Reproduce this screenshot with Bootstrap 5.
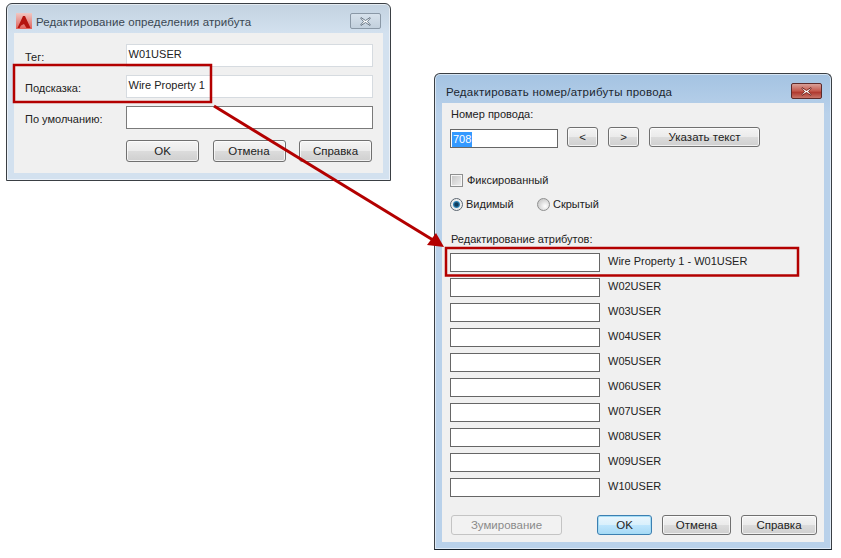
<!DOCTYPE html>
<html lang="ru">
<head>
<meta charset="utf-8">
<title>Атрибуты провода</title>
<link href="https://cdn.jsdelivr.net/npm/bootstrap@5.3.0/dist/css/bootstrap.min.css" rel="stylesheet">
<style>
body{margin:0;background:#fff;color:#222;font-family:"Liberation Sans",Arial,sans-serif;font-size:11px;line-height:16px}
.stage{width:841px;height:558px;overflow:hidden}
.win{border:1px solid #3a3f44;border-radius:6px 6px 0 0;padding:0 7px 7px;box-shadow:inset 0 0 0 1px rgba(255,255,255,.55)}
.win-a{left:6px;top:3px;width:385px;height:178px;background:linear-gradient(#c3d2e0,#d3e1ef 30px,#d3e1ef)}
.win-b{left:434px;top:73px;width:398px;height:477px;background:linear-gradient(#a4c3e2,#b9d1ea 40px,#b9d1ea);border-bottom-color:#16202a}
.cap{height:29px;padding-top:10px}
.cap-text{color:#3a4752;font-size:11.5px;letter-spacing:.1px}
.cap-b{padding-left:4px;color:#1b2630;letter-spacing:.27px}
.app-ico{margin:-1px 4px 0 2px;flex:none}
.client{background:#f0f0f0}
.client-a{height:140px;padding:11px 10px 0 11px}
.client-b{height:439px;padding:3px 7px 0 8px}
.close-a,.close-b{width:31px;height:16px;border-radius:2px;margin:-1px 2px 0 0}
.close-a{border:1px solid #8a98a6;background:linear-gradient(#d7e2ec,#c2d0dd)}
.close-b{border:1px solid #5d2a2a;background:linear-gradient(#d9a098,#c4584c 50%,#b03a30 60%,#c87468)}
.lbl-a{width:100.5px;flex:none;margin-top:2px}
.fld{border-radius:0;padding:0 2px;background:#fff;font-size:11px;line-height:16px;color:#222;min-height:0}
.fld-soft{border:1px solid #d6dbe0;width:248px;height:23px;padding-top:1px}
.fld-hard{border:1px solid #7a7a7a;width:248px;height:23px}
.fld-b{border:1px solid #666;width:150px;height:19px;flex:none}
.fld-num{width:108px;height:19px;border:1px solid #666;padding:1px;margin-top:2px}
.sel{background:#3399ff;color:#fff;padding:0 1px;display:inline-block;line-height:15px}
.rowgap{margin-bottom:8px}
.btns-a{padding:3px 0 0 101px;column-gap:13.5px}
.btn.wbtn{color:#222;border:1px solid #707070;border-radius:3px;background:linear-gradient(#f4f4f4,#ebebeb 48%,#dcdcdc 50%,#cfcfcf);box-shadow:inset 0 0 0 1px rgba(255,255,255,.7);height:22px;padding:0;font-size:11.5px;line-height:18px;flex:none}
.btn.wbtn-dim{width:73px}
.btn.wbtn-s{width:31px;height:20px;margin-left:10px}
.btn.wbtn-s.first{margin-left:9px}
.btn.wbtn-t{width:111px;height:20px;margin-left:10px}
.btn.wbtn-dis{width:111px;height:20px;color:#8a8a8a;border-color:#c4c4c4;background:#f2f2f2;opacity:1;box-shadow:none}
.btn.wbtn-ok{width:55px;height:20px;margin-left:35px;border-color:#3c7fb1;background:linear-gradient(#eaf6fd,#d9f0fc 48%,#bee6fd 50%,#a7d9f5);box-shadow:inset 0 0 0 1px #a4dcf5}
.btn.wbtn-c{width:69px;height:20px;margin-left:10px}
.btn.wbtn-h{width:76px;height:20px;margin-left:10px}
.form-check-input.box{width:13px;height:13px;margin:0 4px 0 0;flex:none;border:1px solid #8e8f8f;border-radius:0;background:linear-gradient(135deg,#c4c4c4,#f0f0f0);box-shadow:inset 0 0 0 1px #f6f6f6}
.form-check-input.opt{width:13px;height:13px;margin:0 3px 0 0;flex:none;border:1px solid #8e8f8f;background:radial-gradient(circle at 65% 65%,#fff,#cfcfcf 70%)}
.form-check-input.opt:checked{background:radial-gradient(circle,#123c5a 0 1.5px,#2f86b9 3px,#e9e9e9 4px,#f4f4f4 6px);border-color:#5c6670}
.t-num{padding-left:1px}
.r-top{margin-top:5px;height:20px}
.r-fix{margin-top:25px;height:16px}
.r-vis{margin-top:8px;height:16px}
.vis-txt{width:71px}
.t-edit{margin-top:19px;margin-bottom:6px;padding-left:1px}
.attr-row{height:25px;gap:8px}
.r-foot{margin-top:12px;padding-left:1px}
.overlay{left:0;top:0;pointer-events:none}
</style>
</head>
<body>
<div class="stage position-relative">

  <section class="win win-a position-absolute">
    <div class="cap d-flex align-items-start">
      <svg class="app-ico" width="16" height="16" viewBox="0 0 16 16"><defs><linearGradient id="ig" x1="0" y1="0" x2="0" y2="1"><stop offset="0" stop-color="#f0c8c4"/><stop offset="1" stop-color="#e0605a"/></linearGradient></defs><rect width="16" height="16" fill="url(#ig)"/><path d="M1.500 15 7 3h2l5.500 12h-4L8 11l-3 1.500L3.500 15z" fill="#b5140f"/></svg>
      <span class="cap-text flex-grow-1">Редактирование определения атрибута</span>
      <div class="close-a d-flex align-items-center justify-content-center"><svg width="15" height="11" viewBox="0 0 15 11"><path d="M3 1.500 7.500 4.500 12 1.500 12.500 2 9.500 5.500 12.500 9 12 9.500 7.500 6.500 3 9.500 2.500 9 5.500 5.500 2.500 2z" fill="#fff" stroke="#6c7a88"/></svg></div>
    </div>
    <div class="client client-a">
      <div class="d-flex align-items-center rowgap"><label class="lbl-a">Тег:</label><div class="form-control fld fld-soft">W01USER</div></div>
      <div class="d-flex align-items-center rowgap"><label class="lbl-a">Подсказка:</label><div class="form-control fld fld-soft">Wire Property 1</div></div>
      <div class="d-flex align-items-center rowgap"><label class="lbl-a">По умолчанию:</label><div class="form-control fld fld-hard"></div></div>
      <div class="d-flex btns-a">
        <button class="btn wbtn wbtn-dim">OK</button><button class="btn wbtn wbtn-dim">Отмена</button><button class="btn wbtn wbtn-dim">Справка</button>
      </div>
    </div>
  </section>

  <section class="win win-b position-absolute">
    <div class="cap d-flex align-items-start">
      <span class="cap-text cap-b flex-grow-1">Редактировать номер/атрибуты провода</span>
      <div class="close-b d-flex align-items-center justify-content-center"><svg width="15" height="11" viewBox="0 0 15 11"><path d="M3 1.500 7.500 4.500 12 1.500 12.500 2 9.500 5.500 12.500 9 12 9.500 7.500 6.500 3 9.500 2.500 9 5.500 5.500 2.500 2z" fill="#fff" stroke="#7a2a22"/></svg></div>
    </div>
    <div class="client client-b">
      <div class="t-num">Номер провода:</div>
      <div class="d-flex align-items-start r-top">
        <div class="form-control fld fld-num"><span class="sel">708</span></div>
        <button class="btn wbtn wbtn-s first">&lt;</button>
        <button class="btn wbtn wbtn-s">&gt;</button>
        <button class="btn wbtn wbtn-t">Указать текст</button>
      </div>
      <div class="d-flex align-items-center r-fix"><input class="form-check-input box" type="checkbox"><span>Фиксированный</span></div>
      <div class="d-flex align-items-center r-vis">
        <input class="form-check-input opt" type="radio" name="v" checked><span class="vis-txt">Видимый</span>
        <input class="form-check-input opt" type="radio" name="v"><span>Скрытый</span>
      </div>
      <div class="t-edit">Редактирование атрибутов:</div>
      <div class="d-flex attr-row"><div class="form-control fld fld-b"></div><span>Wire Property 1 - W01USER</span></div>
      <div class="d-flex attr-row"><div class="form-control fld fld-b"></div><span>W02USER</span></div>
      <div class="d-flex attr-row"><div class="form-control fld fld-b"></div><span>W03USER</span></div>
      <div class="d-flex attr-row"><div class="form-control fld fld-b"></div><span>W04USER</span></div>
      <div class="d-flex attr-row"><div class="form-control fld fld-b"></div><span>W05USER</span></div>
      <div class="d-flex attr-row"><div class="form-control fld fld-b"></div><span>W06USER</span></div>
      <div class="d-flex attr-row"><div class="form-control fld fld-b"></div><span>W07USER</span></div>
      <div class="d-flex attr-row"><div class="form-control fld fld-b"></div><span>W08USER</span></div>
      <div class="d-flex attr-row"><div class="form-control fld fld-b"></div><span>W09USER</span></div>
      <div class="d-flex attr-row"><div class="form-control fld fld-b"></div><span>W10USER</span></div>
      <div class="d-flex r-foot">
        <button class="btn wbtn wbtn-dis" disabled>Зумирование</button>
        <button class="btn wbtn wbtn-ok">OK</button>
        <button class="btn wbtn wbtn-c">Отмена</button>
        <button class="btn wbtn wbtn-h">Справка</button>
      </div>
    </div>
  </section>

  <svg class="overlay position-absolute" width="841" height="558" viewBox="0 0 841 558">
    <rect x="14" y="65" width="197" height="37" fill="none" stroke="#b30000" stroke-width="2.500"/>
    <rect x="446" y="248" width="352" height="27.500" fill="none" stroke="#b30000" stroke-width="2.500"/>
    <line x1="214" y1="106" x2="433" y2="240" stroke="#b30000" stroke-width="3"/>
    <polygon points="444,247 427,245 436,233" fill="#b30000"/>
  </svg>
</div>
</body>
</html>
